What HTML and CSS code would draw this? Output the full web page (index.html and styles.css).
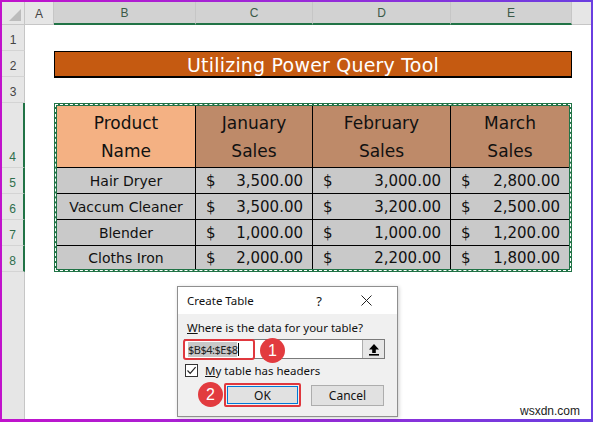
FILE: index.html
```html
<!DOCTYPE html>
<html>
<head>
<meta charset="utf-8">
<link rel="stylesheet" href="styles.css">
</head>
<body>
<div class="frame">
  <div class="sheet">
    <div class="hd corner"><span class="tri"></span></div>
    <div class="hd col">A</div>
    <div class="hd col sel">B</div>
    <div class="hd col sel">C</div>
    <div class="hd col sel">D</div>
    <div class="hd col sel">E</div>
    <div class="hd col fill"></div>

    <div class="hd row r1">1</div>
    <div class="hd row r2">2</div>
    <div class="hd row r3">3</div>
    <div class="hd row rsel r4">4</div>
    <div class="hd row rsel r5">5</div>
    <div class="hd row rsel r6">6</div>
    <div class="hd row rsel r7">7</div>
    <div class="hd row rsel r8">8</div>
    <div class="hd row r9"></div>

    <div class="title">Utilizing Power Query Tool</div>

    <div class="data">
      <div class="c h1">Product<br>Name</div>
      <div class="c h2">January<br>Sales</div>
      <div class="c h2">February<br>Sales</div>
      <div class="c h2 last">March<br>Sales</div>

      <div class="c name">Hair Dryer</div>
      <div class="c num"><span>$</span><span>3,500.00</span></div>
      <div class="c num"><span>$</span><span>3,000.00</span></div>
      <div class="c num last"><span>$</span><span>2,800.00</span></div>

      <div class="c name">Vaccum Cleaner</div>
      <div class="c num"><span>$</span><span>3,500.00</span></div>
      <div class="c num"><span>$</span><span>3,200.00</span></div>
      <div class="c num last"><span>$</span><span>2,500.00</span></div>

      <div class="c name">Blender</div>
      <div class="c num"><span>$</span><span>1,000.00</span></div>
      <div class="c num"><span>$</span><span>1,000.00</span></div>
      <div class="c num last"><span>$</span><span>1,200.00</span></div>

      <div class="c name bot">Cloths Iron</div>
      <div class="c num bot"><span>$</span><span>2,000.00</span></div>
      <div class="c num bot"><span>$</span><span>2,200.00</span></div>
      <div class="c num bot last"><span>$</span><span>1,800.00</span></div>
    </div>
  </div>

  <div class="dialog">
    <div class="dlg-title">
      <span class="dlg-name">Create Table</span>
      <span class="dlg-help">?</span>
      <svg class="dlg-close" width="11" height="11" viewBox="0 0 11 11"><path d="M0.5 0.5 L10.5 10.5 M10.5 0.5 L0.5 10.5" stroke="#222" stroke-width="1"/></svg>
    </div>
    <div class="dlg-body">
      <div class="dlg-label"><u>W</u>here is the data for your table?</div>
      <div class="range">
        <div class="range-text"><span class="selected">$B$4:$E$8</span><span class="caret"></span></div>
        <div class="range-btn">
          <svg width="12" height="13" viewBox="0 0 12 13"><path d="M6 1 L11 6.5 L7.8 6.5 L7.8 10 L4.2 10 L4.2 6.5 L1 6.5 Z" fill="#000"/><rect x="1" y="11" width="10" height="1.6" fill="#000"/></svg>
        </div>
      </div>
      <div class="check-row">
        <span class="checkbox"><svg width="11" height="11" viewBox="0 0 11 11"><path d="M1.5 5.5 L4.2 8.3 L9.6 2.2" stroke="#222" stroke-width="1.2" fill="none"/></svg></span>
        <span class="check-label"><u>M</u>y table has headers</span>
      </div>
      <div class="buttons">
        <div class="ok-wrap"><div class="btn ok">OK</div></div>
        <div class="btn cancel">Cancel</div>
      </div>
    </div>
    <div class="hl-range"></div>
  </div>

  <div class="badge b1">1</div>
  <div class="badge b2">2</div>
  <div class="watermark">wsxdn.com</div>
</div>
</body>
</html>
```

FILE: styles.css
```css
* { box-sizing: border-box; }
html, body { margin: 0; padding: 0; background: #fff; }

.frame {
  position: relative;
  width: 593px;
  height: 422px;
  padding: 2px 2px 3px 2px;
  background: linear-gradient(90deg, #c112cc 0%, #9a2ad8 50%, #6a3ee0 100%);
  overflow: hidden;
}

.sheet {
  width: 589px;
  height: 417px;
  background: #fff;
  display: grid;
  grid-template-columns: 23px 29px 142px 117px 138px 121px 1fr;
  grid-template-rows: 23px 26px 26px 26px 65px 26px 26px 26px 26px 1fr;
  font-family: "Liberation Sans", Arial, sans-serif;
}

.hd {
  background: #e6e6e6;
  color: #444;
  font-size: 12px;
  display: flex;
}
.corner {
  position: relative;
  border-right: 1px solid #c6c6c6;
  border-bottom: 1px solid #c6c6c6;
}
.tri {
  position: absolute;
  right: 3px;
  bottom: 3px;
  width: 0;
  height: 0;
  border-left: 12px solid transparent;
  border-bottom: 12px solid #bcbcbc;
}
.col {
  align-items: center;
  justify-content: center;
  border-right: 1px solid #c6c6c6;
  border-bottom: 1px solid #c6c6c6;
  padding-top: 1px;
}
.col.sel {
  background: #d2d2d2;
  color: #3b5a48;
  border-bottom: 2px solid #217346;
}
.col.fill { border-right: none; }

.row {
  grid-column: 1;
  align-items: flex-end;
  justify-content: center;
  padding-bottom: 3px;
  border-right: 1px solid #c6c6c6;
  border-bottom: 1px solid #d4d4d4;
}
.row.rsel {
  color: #2e6e4c;
  border-right: 2px solid #217346;
}
.r1 { grid-row: 2; }
.r2 { grid-row: 3; }
.r3 { grid-row: 4; }
.r4 { grid-row: 5; }
.r5 { grid-row: 6; }
.r6 { grid-row: 7; }
.r7 { grid-row: 8; }
.r8 { grid-row: 9; }
.r9 { grid-row: 10; border-bottom: none; }

.title {
  grid-column: 3 / 7;
  grid-row: 3;
  margin-bottom: -1px;
  background: #c55a11;
  border: 1px solid #000;
  border-bottom: 2px solid #000;
  color: #fff;
  font-family: "DejaVu Sans", sans-serif;
  font-size: 19px;
  display: flex;
  align-items: center;
  justify-content: center;
  padding-top: 1px;
  letter-spacing: 0.2px;
}

.data {
  grid-column: 3 / 7;
  grid-row: 5 / 10;
  border: 3px solid #217346;
  outline: 1px dashed #fff;
  outline-offset: -2px;
  display: grid;
  grid-template-columns: 139px 117px 138px 118px;
  grid-template-rows: 62px 26px 26px 26px 23px;
  font-family: "DejaVu Sans", sans-serif;
  color: #111;
}
.c {
  border-right: 1px solid #000;
  border-bottom: 1px solid #000;
  display: flex;
  align-items: center;
}
.c.last { border-right: none; }
.c.bot { border-bottom: none; }
.h1, .h2 {
  justify-content: center;
  text-align: center;
  font-size: 17px;
  line-height: 28px;
  padding-top: 1px;
}
.h1 { background: #f4b183; }
.h2 { background: #be8a69; }
.name {
  background: #c9c9c9;
  justify-content: center;
  font-size: 14px;
}
.num {
  background: #c9c9c9;
  justify-content: space-between;
  padding: 0 9px 0 10px;
  font-size: 15px;
}

.dialog {
  position: absolute;
  left: 177px;
  top: 286px;
  width: 221px;
  height: 131px;
  background: #f0f0f0;
  border: 1px solid #8f8f8f;
  box-shadow: 1px 1px 4px rgba(0,0,0,0.2);
  font-family: "Noto Sans", "Liberation Sans", sans-serif;
  color: #111;
  display: flex;
  flex-direction: column;
}
.dlg-title {
  height: 27px;
  background: #fff;
  display: flex;
  align-items: center;
  padding: 0 0 0 9px;
  font-size: 11.5px;
}
.dlg-name { flex: 1; }
.dlg-help { margin-right: 39px; font-size: 13px; }
.dlg-close { margin-right: 25px; }

.dlg-body {
  padding: 6px 0 0 6px;
  font-size: 11.5px;
  display: flex;
  flex-direction: column;
}
.dlg-label { padding-left: 3px; line-height: 16px; }
.range {
  margin-top: 3px;
  width: 201px;
  height: 20px;
  display: flex;
  background: #fff;
  border: 1px solid #7a7a7a;
}
.range-text {
  flex: 1;
  display: flex;
  align-items: center;
  padding-left: 3px;
  font-size: 11px;
}
.selected { background: #c8c8c8; color: #222; letter-spacing: -0.5px; }
.caret { width: 1px; height: 13px; background: #000; margin-left: 1px; }
.range-btn {
  width: 22px;
  background: #e6e6e6;
  border-left: 1px solid #adadad;
  display: flex;
  align-items: center;
  justify-content: center;
}
.check-row {
  margin-top: 5px;
  height: 13px;
  display: flex;
  align-items: center;
}
.checkbox {
  width: 13px;
  height: 13px;
  margin-left: 1px;
  border: 1px solid #333;
  background: #fff;
  display: flex;
  align-items: center;
  justify-content: center;
}
.check-label { margin-left: 7px; }
.buttons {
  margin-top: 6px;
  display: flex;
  align-items: center;
  padding-left: 40px;
}
.ok-wrap {
  width: 77px;
  height: 24px;
  border: 2px solid #e0383e;
  border-radius: 2px;
  padding: 1px;
}
.btn {
  display: flex;
  align-items: center;
  justify-content: center;
  background: #e1e1e1;
  font-size: 12px;
}
.ok { height: 100%; border: 1px solid #0078d7; }
.cancel {
  margin-left: 10px;
  width: 73px;
  height: 21px;
  border: 1px solid #adadad;
}
.hl-range {
  position: absolute;
  left: 5px;
  top: 52px;
  width: 72px;
  height: 21px;
  border: 2px solid #e0383e;
  border-radius: 3px;
}

.badge {
  position: absolute;
  width: 25px;
  height: 25px;
  border-radius: 50%;
  background: #e23b3f;
  color: #fff;
  font-family: "Liberation Sans", Arial, sans-serif;
  font-size: 16px;
  display: flex;
  align-items: center;
  justify-content: center;
}
.b1 { left: 260px; top: 338px; }
.b2 { left: 198px; top: 382px; }

.watermark {
  position: absolute;
  left: 520px;
  top: 404px;
  font-family: "Liberation Sans", Arial, sans-serif;
  font-size: 12px;
  color: #222;
}
```
